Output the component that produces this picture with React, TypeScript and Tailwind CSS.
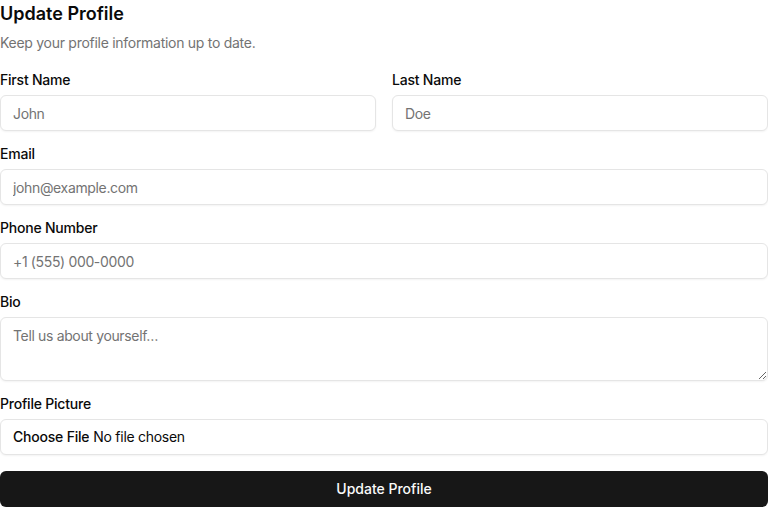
import React from "react";

const inputCls =
  "h-9 w-full rounded-md border border-[#e5e5e5] bg-white px-3 py-1 text-sm tracking-[-0.025em] text-[#0a0a0a] shadow-xs outline-none placeholder:text-[#737373]";

function Field({ label, children }: { label: string; children: React.ReactNode }) {
  return (
    <div className="flex flex-col gap-2">
      <label className="text-sm font-medium leading-none tracking-[-0.015em] text-[#0a0a0a]">{label}</label>
      {children}
    </div>
  );
}

export default function App() {
  return (
    <div className="w-[768px] bg-white font-['Inter',sans-serif] text-[#0a0a0a]">
      <div className="flex flex-col">
        <h2 className="text-lg font-semibold leading-7">Update Profile</h2>
        <p className="mt-[5px] text-sm leading-5 tracking-[-0.02em] text-[#737373]">Keep your profile information up to date.</p>
      </div>
      <form className="mt-[20px] flex flex-col gap-4">
        <div className="grid grid-cols-2 gap-4">
          <Field label="First Name">
            <input className={inputCls} placeholder="John" />
          </Field>
          <Field label="Last Name">
            <input className={inputCls} placeholder="Doe" />
          </Field>
        </div>
        <Field label="Email">
          <input className={inputCls} placeholder="john@example.com" />
        </Field>
        <Field label="Phone Number">
          <input className={inputCls} placeholder="+1 (555) 000-0000" />
        </Field>
        <Field label="Bio">
          <textarea
            className="block h-16 min-h-16 w-full rounded-md border border-[#e5e5e5] bg-white px-3 py-2 text-sm tracking-[-0.025em] text-[#0a0a0a] shadow-xs outline-none placeholder:text-[#737373]"
            placeholder="Tell us about yourself…"
          />
        </Field>
        <Field label="Profile Picture">
          <input
            type="file"
            className="h-9 w-full rounded-md border border-[#e5e5e5] bg-white px-3 py-[7px] text-sm tracking-[-0.02em] text-[#0a0a0a] shadow-xs outline-none file:mr-1 file:border-0 file:bg-transparent file:p-0 file:text-sm file:font-medium file:tracking-[-0.015em] file:text-[#0a0a0a]"
          />
        </Field>
        <button
          type="button"
          className="h-9 w-full rounded-md bg-[#171717] text-sm font-medium text-[#fafafa] shadow-xs"
        >
          Update Profile
        </button>
      </form>
    </div>
  );
}
